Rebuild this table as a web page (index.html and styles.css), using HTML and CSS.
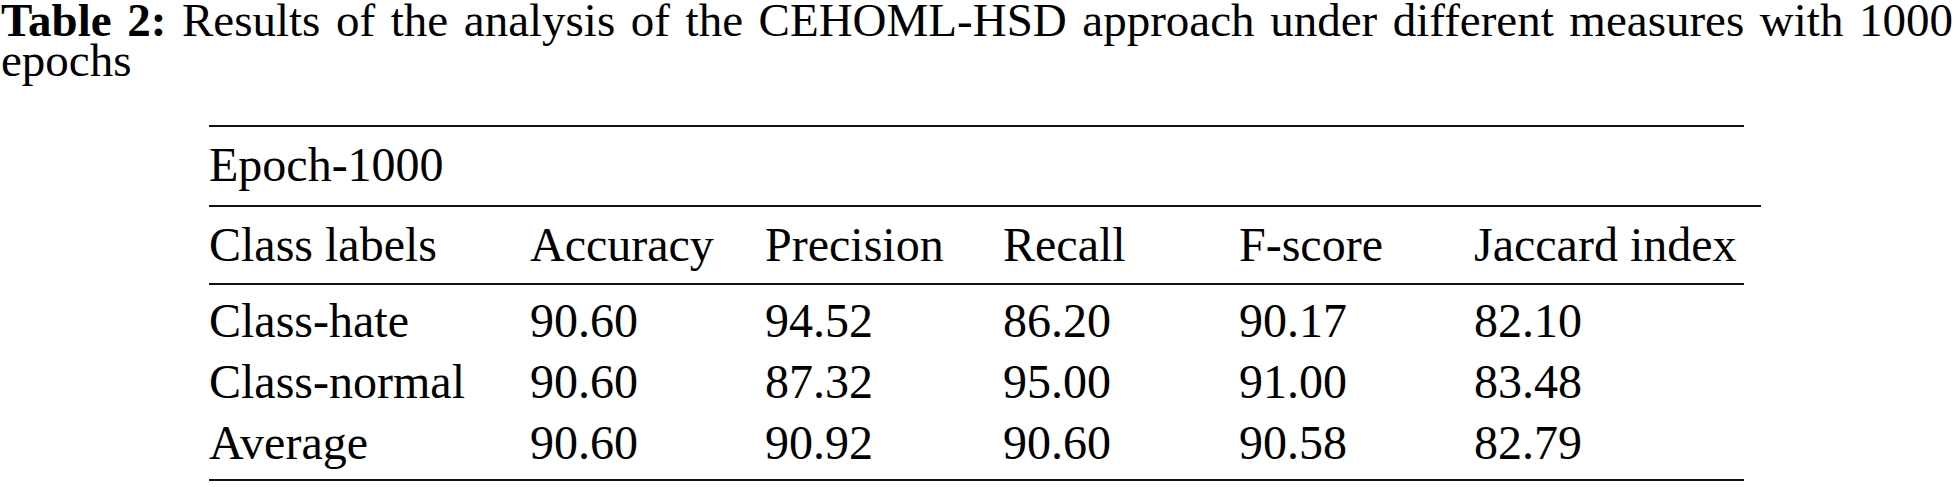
FILE: index.html
```html
<!DOCTYPE html>
<html lang="en">
<head>
<meta charset="utf-8">
<title>Table 2</title>
<link rel="stylesheet" href="styles.css">
</head>
<body>
<div class="page">
  <p class="caption"><b>Table 2:</b> Results of the analysis of the CEHOML-HSD approach under different measures with 1000 epochs</p>
  <table class="results">
    <colgroup>
      <col class="c1"><col class="c2"><col class="c3"><col class="c4"><col class="c5"><col class="c6"><col class="c7">
    </colgroup>
    <tbody>
      <tr class="epoch-row">
        <td colspan="6" class="epoch">Epoch-1000</td>
        <td class="gap"></td>
      </tr>
      <tr class="head-row">
        <td>Class labels</td>
        <td>Accuracy</td>
        <td>Precision</td>
        <td>Recall</td>
        <td>F-score</td>
        <td>Jaccard index</td>
        <td class="gap"></td>
      </tr>
      <tr class="body-row first">
        <td>Class-hate</td>
        <td>90.60</td>
        <td>94.52</td>
        <td>86.20</td>
        <td>90.17</td>
        <td>82.10</td>
        <td class="gap"></td>
      </tr>
      <tr class="body-row">
        <td>Class-normal</td>
        <td>90.60</td>
        <td>87.32</td>
        <td>95.00</td>
        <td>91.00</td>
        <td>83.48</td>
        <td class="gap"></td>
      </tr>
      <tr class="body-row last">
        <td>Average</td>
        <td>90.60</td>
        <td>90.92</td>
        <td>90.60</td>
        <td>90.58</td>
        <td>82.79</td>
        <td class="gap"></td>
      </tr>
    </tbody>
  </table>
</div>
</body>
</html>
```
FILE: styles.css
```css
html {
  overflow: hidden;
}

html, body {
  margin: 0;
  padding: 0;
  background: #fff;
}

.page {
  width: 1952px;
  padding: 0 0 0 1px;
  font-family: "Liberation Serif", "Times New Roman", serif;
  color: #000;
}

.caption {
  margin: 0;
  font-size: 47px;
  line-height: 40px;
  text-align: justify;
}

.caption b {
  font-weight: bold;
}

.results {
  margin: 45px 0 0 208px;
  border-collapse: collapse;
  table-layout: fixed;
  width: 1552px;
  font-size: 48px;
}

.c1 { width: 321px; }
.c2 { width: 235px; }
.c3 { width: 238px; }
.c4 { width: 236px; }
.c5 { width: 235px; }
.c6 { width: 270px; }
.c7 { width: 17px; }

.results td {
  padding: 0;
  text-align: left;
  vertical-align: top;
  white-space: nowrap;
  line-height: 56px;
}

.epoch-row td {
  padding: 10px 0 12px;
  border-bottom: 2px solid #111;
}

.epoch-row .epoch {
  border-top: 2px solid #111;
}

.head-row td {
  padding: 10px 0 10px;
  border-bottom: 2px solid #111;
}

.results .body-row td {
  line-height: 61px;
}

.body-row.first td {
  padding-top: 5px;
}

.body-row.last td {
  padding-bottom: 6px;
  border-bottom: 2px solid #111;
}

.head-row .gap,
.body-row.last .gap {
  border-bottom: none;
}
```
